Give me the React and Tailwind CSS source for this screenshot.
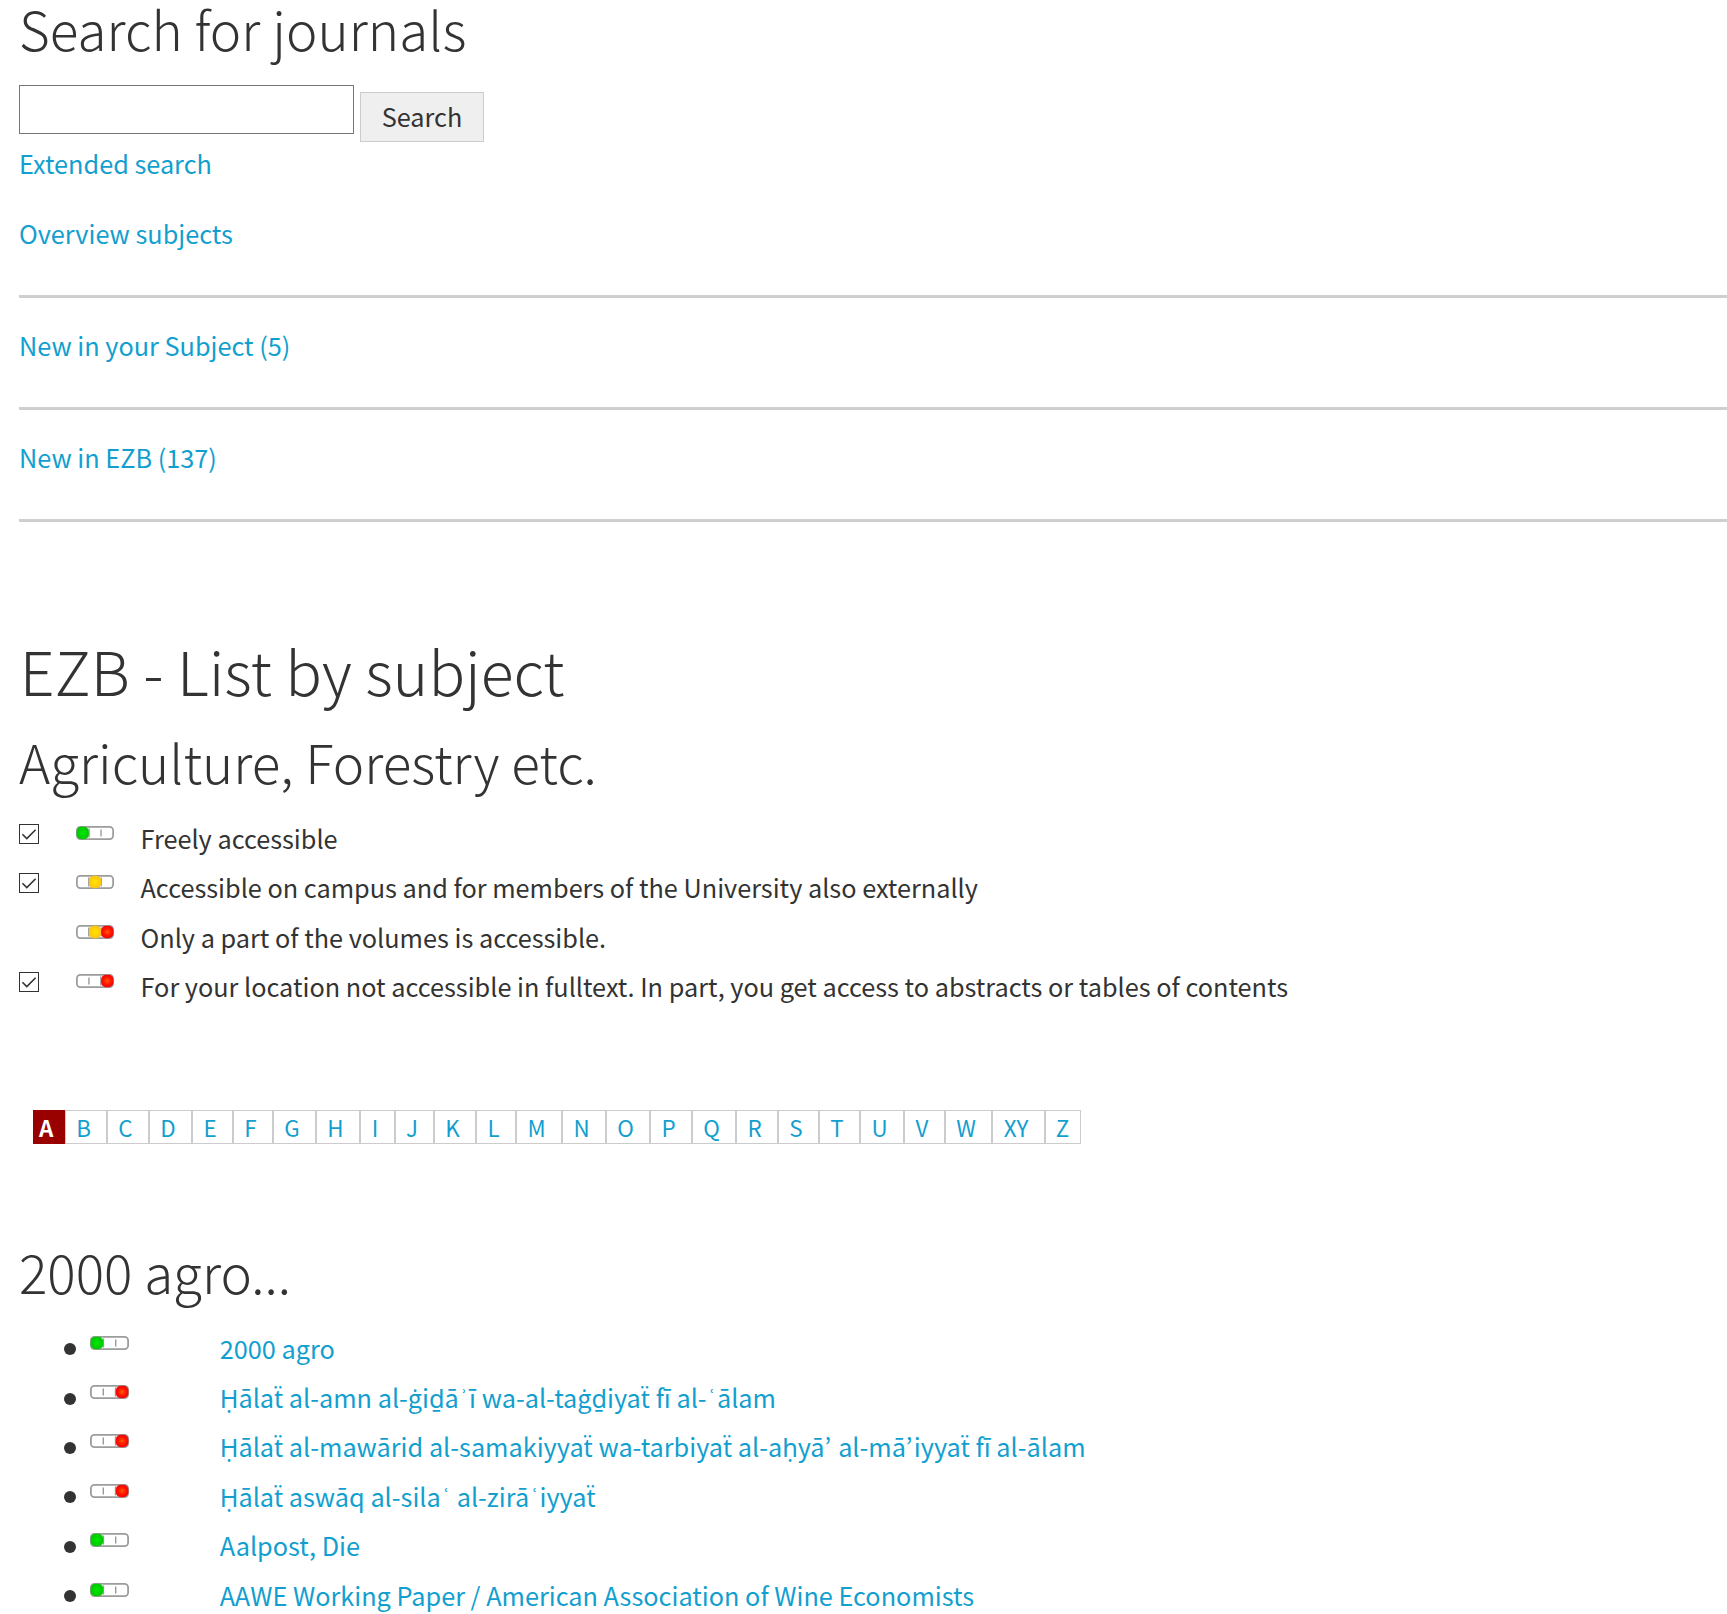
import React from "react";

const LAMPS = { green: ["g"], yellow: ["y"], mixed: ["y", "r"], red: ["r"] };

function Light({ kind, className = "" }) {
  const on = LAMPS[kind];
  return (
    <svg viewBox="0 0 39 14" preserveAspectRatio="none" className={"block shrink-0 " + className}>
      <defs>
        <radialGradient id="lamp-g"><stop offset="0" stopColor="#00e800" /><stop offset="1" stopColor="#00c800" /></radialGradient>
        <radialGradient id="lamp-y"><stop offset="0" stopColor="#ffe600" /><stop offset="1" stopColor="#fcc410" /></radialGradient>
        <radialGradient id="lamp-r"><stop offset="0" stopColor="#ff5a00" /><stop offset="0.6" stopColor="#ff1500" /><stop offset="1" stopColor="#f00808" /></radialGradient>
      </defs>
      <rect x="0.9" y="0.9" width="37.2" height="12.2" rx="3.6" fill="#fff" stroke="#9c9c9c" strokeWidth="1.8" />
      {kind === "green" && <path d="M25.7 3.5v7M13.4 2.5v9" stroke="#999" strokeWidth="1.4" />}
      {kind === "red" && <path d="M13.3 3.5v7M25.5 2.5v9" stroke="#999" strokeWidth="1.4" />}
      {(kind === "yellow" || kind === "mixed") && <path d="M13.1 2.5v9M25.8 2.5v9" stroke="#999" strokeWidth="1.4" />}
      {on.includes("g") && <rect x="0.6" y="0.8" width="12.6" height="12.4" rx="5" fill="url(#lamp-g)" />}
      {on.includes("y") && <rect x="13.2" y="0.8" width="12.6" height="12.4" rx="5" fill="url(#lamp-y)" />}
      {on.includes("r") && <rect x="25.8" y="0.8" width="12.6" height="12.4" rx="5" fill="url(#lamp-r)" />}
    </svg>
  );
}

function Check() {
  return (
    <svg viewBox="0 0 20 20" className="block h-5 w-5">
      <rect x="0.5" y="0.5" width="19" height="19" fill="#fff" stroke="#333" />
      <path d="M3.4 10.2l4.4 4.4 8.8-8.8" fill="none" stroke="#333" strokeWidth="1.6" />
    </svg>
  );
}

const legend = [
  { kind: "green", check: true, text: "Freely accessible" },
  { kind: "yellow", check: true, text: "Accessible on campus and for members of the University also externally" },
  { kind: "mixed", check: false, text: "Only a part of the volumes is accessible." },
  { kind: "red", check: true, text: "For your location not accessible in fulltext. In part, you get access to abstracts or tables of contents" },
];

const letters = [
  ["B", "w-[42px] pr-[5px]"], ["C", "w-[42px] pr-[5px]"], ["D", "w-[43px] pr-[5px]"], ["E", "w-[41px] pr-[5px]"],
  ["F", "w-[40px] pr-[5px]"], ["G", "w-[43px] pr-[5px]"], ["H", "w-[44px] pr-[5px]"], ["I", "w-[35px] pr-[5px]"],
  ["J", "w-[39px] pr-[5px]"], ["K", "w-[42px] pr-[5px]"], ["L", "w-[40px] pr-[5px]"], ["M", "w-[46px] pr-[5px]"],
  ["N", "w-[44px] pr-[5px]"], ["O", "w-[44px] pr-[5px]"], ["P", "w-[42px] pr-[5px]"], ["Q", "w-[44px] pr-[5px]"],
  ["R", "w-[42px] pr-[5px]"], ["S", "w-[41px] pr-[5px]"], ["T", "w-[41px] pr-[5px]"], ["U", "w-[44px] pr-[5px]"],
  ["V", "w-[41px] pr-[5px]"], ["W", "w-[47px] pr-[5px]"], ["XY", "w-[53px] pr-[5px]"], ["Z", "w-[36px] pr-[1px]"],
];

const journals = [
  { kind: "green", text: "2000 agro" },
  { kind: "red", text: "Ḥālaẗ al-amn al-ġiḏāʾī wa-al-taġḏiyaẗ fī al-ʿālam" },
  { kind: "red", text: "Ḥālaẗ al-mawārid al-samakiyyaẗ wa-tarbiyaẗ al-aḥyā’ al-mā’iyyaẗ fī al-ālam" },
  { kind: "red", text: "Ḥālaẗ aswāq al-silaʿ al-zirāʿiyyaẗ" },
  { kind: "green", text: "Aalpost, Die" },
  { kind: "green", text: "AAWE Working Paper / American Association of Wine Economists" },
];

// Sets the half rings in a fixed advance and centres the dot over the two-storey g.
function Transliterated({ text }) {
  return text.split(/([ġʾʿ’])/).map((part, i) => {
    if (part === "ġ") {
      return (
        <span key={i} className="relative">
          g<span className="absolute top-[7px] left-0 w-full text-center font-['Noto_Sans'] leading-none">˙</span>
        </span>
      );
    }
    if (part === "ʾ" || part === "ʿ") {
      return <span key={i} className="inline-block w-[10.3px] text-center align-[3px] text-[20px] leading-none">{part}</span>;
    }
    if (part === "’") {
      return <span key={i} className="mr-[1.3px]">{part}</span>;
    }
    return part;
  });
}

function Link({ children, className = "" }) {
  return <a href="#" className={"block w-max whitespace-nowrap text-[#129fcf] " + className}>{children}</a>;
}

export default function App() {
  return (
    <div className="h-[1614px] overflow-hidden bg-white pl-[19px] font-['Noto_Sans_CJK_KR','Noto_Sans',sans-serif] text-[25.28px] text-[#333]">
      <h2 className="h-[85px] text-[53px] leading-[56px] font-extralight tracking-[0.06px] whitespace-nowrap">Search for journals</h2>
      <form className="flex h-[63px] items-start gap-[6px]" onSubmit={(e) => e.preventDefault()}>
        <input type="text" aria-label="Search for journals" className="h-[49px] w-[335px] border border-[#767676] bg-white px-2 outline-none" />
        <button type="submit" className="mt-[7px] h-[50px] w-[124px] border border-[#ccc] bg-[#efefef] pb-[2px] leading-[46px]">Search</button>
      </form>
      <Link className="h-[70px] leading-[30px]">Extended search</Link>
      <Link className="h-[77px] leading-[30px]">Overview subjects</Link>
      <hr className="h-[3px] border-0 bg-[#cfcfcf]" />
      <Link className="h-[109px] leading-[94px]">New in your Subject (5)</Link>
      <hr className="h-[3px] border-0 bg-[#cfcfcf]" />
      <Link className="h-[109px] leading-[94px]">New in EZB (137)</Link>
      <hr className="h-[3px] border-0 bg-[#cfcfcf]" />
      <h1 className="mt-[113px] h-[93px] pl-[0.7px] text-[60.8px] leading-[70px] font-light whitespace-nowrap">EZB - List by subject</h1>
      <h2 className="h-[86px] text-[53px] leading-[66px] font-extralight whitespace-nowrap">Agriculture, Forestry etc.</h2>
      <ul>
        {legend.map((row) => (
          <li key={row.kind} className="flex h-[49.4px] items-start leading-[48.4px]">
            <div className="w-[57px] pt-[10px]">{row.check && <Check />}</div>
            <Light kind={row.kind} className="mt-[12px] h-[14px] w-[38px]" />
            <span className="ml-[26.5px] whitespace-nowrap">{row.text}</span>
          </li>
        ))}
      </ul>
      <nav className="mt-[98px] ml-[14px] flex h-[34px] text-[22.4px] leading-[32px]">
        <span className="w-[32px] shrink-0 bg-[#900] pt-px pl-[6px] font-bold text-white">A</span>
        {letters.map(([label, width]) => (
          <a key={label} href="#" className={"shrink-0 border border-[#ccc] text-center text-[#129fcf] " + width}>{label}</a>
        ))}
      </nav>
      <h2 className="mt-[94px] h-[86px] text-[53px] leading-[66px] font-extralight whitespace-nowrap">2000 agro...</h2>
      <ul>
        {journals.map((j) => (
          <li key={j.text} className="flex h-[49.4px] items-start leading-[48.4px]">
            <i className="mt-[19.6px] ml-[45px] h-[12px] w-[12px] rounded-full bg-[#333]" />
            <Light kind={j.kind} className="mt-[12px] ml-[14px] h-[14px] w-[39px]" />
            <Link className="ml-[90.7px]"><Transliterated text={j.text} /></Link>
          </li>
        ))}
      </ul>
    </div>
  );
}
